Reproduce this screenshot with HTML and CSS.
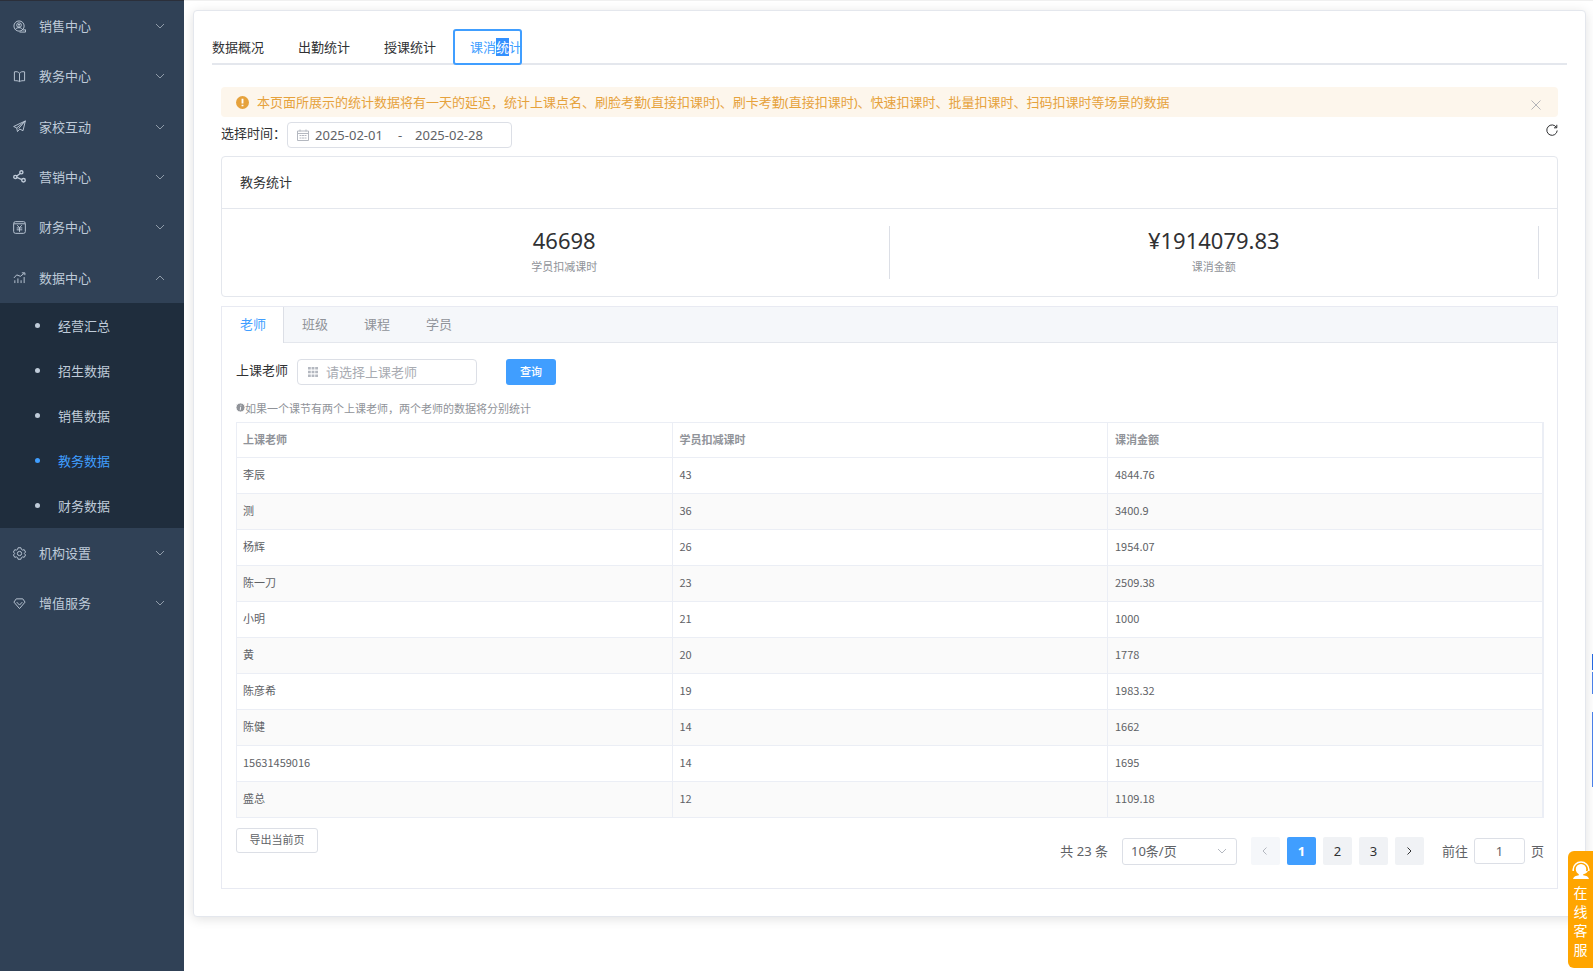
FILE: index.html
```html
<!DOCTYPE html>
<html lang="zh-CN">
<head>
<meta charset="utf-8">
<title>教务数据</title>
<link rel="stylesheet" href="styles.css">
</head>
<body>
<svg class="defs" aria-hidden="true">
  <symbol id="down" viewBox="0 0 10 10"><path d="M1 3l4 4 4-4"/></symbol>
  <symbol id="up" viewBox="0 0 10 10"><path d="M1 7l4-4 4 4"/></symbol>
</svg>
<div class="layout">
  <nav class="sidebar">
    <ul class="menu menu-top">
      <li><button class="menu-item"><svg class="ico" viewBox="0 0 14 14"><circle cx="6.5" cy="6.5" r="5.5"/><circle cx="6.5" cy="5.5" r="2.5"/><path d="M5.500 4.300l1 1.300 1-1.300M6.500 5.600v2M2.500 10.300c1-1.500 2-2 4-2s3.500 1 4 2.500l3-.3v2.500H7"/></svg><span>销售中心</span><svg class="arrow"><use href="#down"/></svg></button></li>
      <li><button class="menu-item"><svg class="ico" viewBox="0 0 14 14"><path d="M7 3.500C6 2 4 1.500 1.500 2v9.500c2 0 4 0 5.500 1 1.500-1 3.500-1 5.500-1V2C10 1.500 8 2 7 3.500zM7 3.500v9"/></svg><span>教务中心</span><svg class="arrow"><use href="#down"/></svg></button></li>
      <li><button class="menu-item"><svg class="ico" viewBox="0 0 14 14"><path d="M.7 7L13.300 1l-2.500 10.500-3.500-1.700-2.500 2.700-.8-4zM4 8.500L13.300 1 6 9.300"/></svg><span>家校互动</span><svg class="arrow"><use href="#down"/></svg></button></li>
      <li><button class="menu-item"><svg class="ico ico-bold" viewBox="0 0 14 14"><circle cx="2.500" cy="7.500" r="1.700"/><circle cx="9" cy="2.500" r="1.700"/><circle cx="11.300" cy="11" r="1.900"/><path d="M4 6.500l3.800-2.800M4.200 8l5.300 2.300"/></svg><span>营销中心</span><svg class="arrow"><use href="#down"/></svg></button></li>
      <li><button class="menu-item"><svg class="ico" viewBox="0 0 14 14"><rect x=".7" y=".7" width="12.600" height="12.600" rx="2"/><path d="M1 3h12M4.500 4.500L7 7.200l2.500-2.700M7 7.200v4.500M4 7.500h6M4 9.500h6"/></svg><span>财务中心</span><svg class="arrow"><use href="#down"/></svg></button></li>
      <li><button class="menu-item"><svg class="ico" viewBox="0 0 14 14"><path d="M2 13v-3M5.300 13V8M8.700 13v-3M12 13V6.500M1 7.500l3-3.300 4 1.500 4-3.200M9.500 2h3.300v2.500"/></svg><span>数据中心</span><svg class="arrow"><use href="#up"/></svg></button></li>
    </ul>
    <ul class="submenu">
      <li><a href="#">经营汇总</a></li>
      <li><a href="#">招生数据</a></li>
      <li><a href="#">销售数据</a></li>
      <li><a href="#" class="current">教务数据</a></li>
      <li><a href="#">财务数据</a></li>
    </ul>
    <ul class="menu">
      <li><button class="menu-item"><svg class="ico" viewBox="0 0 14 14"><circle cx="7" cy="7" r="2.300"/><path d="M5.500.8h3l.5 1.700 1.300.8 1.800-.4 1.400 2.500L12.200 7l1.300 1.600-1.400 2.500-1.800-.4-1.300.8-.5 1.700h-3L5 11.500l-1.300-.8-1.800.4L.5 8.600 1.800 7 .5 5.400l1.400-2.500 1.800.4L5 2.500z"/></svg><span>机构设置</span><svg class="arrow"><use href="#down"/></svg></button></li>
      <li><button class="menu-item"><svg class="ico" viewBox="0 0 14 14"><path d="M3.500 2h7l2.500 3.500L7 12.500 1 5.500zM4 5.500l3 3.200 3-3.200"/></svg><span>增值服务</span><svg class="arrow"><use href="#down"/></svg></button></li>
    </ul>
  </nav>

  <main class="main">
    <section class="page-card">
      <div class="page-tabs" role="tablist">
        <button role="tab">数据概况</button>
        <button role="tab">出勤统计</button>
        <button role="tab">授课统计</button>
        <button role="tab" class="selected" aria-selected="true">课消<mark>统</mark>计</button>
      </div>

      <div class="content">
        <div class="notice">
          <svg class="notice-icon" viewBox="0 0 14 14"><circle cx="7" cy="7" r="7"/><path d="M7 3v5M7 9.500v1.500"/></svg>
          <p>本页面所展示的统计数据将有一天的延迟，统计上课点名、刷脸考勤(直接扣课时)、刷卡考勤(直接扣课时)、快速扣课时、批量扣课时、扫码扣课时等场景的数据</p>
          <button class="notice-close" aria-label="关闭"><svg viewBox="0 0 10 10"><path d="M.5.5l9 9M9.500.5l-9 9"/></svg></button>
        </div>

        <div class="date-row">
          <label for="from">选择时间：</label>
          <div class="date-range">
            <svg class="calendar" viewBox="0 0 12 12"><path d="M.5 2h11v9.500H.5zM.5 4.500h11M3 .5v2M9 .5v2M2.500 6.500h2M5 6.500h2M7.500 6.500h2M2.500 9h2M5 9h2M7.500 9h2"/></svg>
            <input id="from" value="2025-02-01"><span>-</span><input aria-label="结束日期" value="2025-02-28">
          </div>
          <button class="refresh" aria-label="刷新"><svg viewBox="0 0 12 12"><path d="M10.500 3.500A5.200 5.200 0 1 0 11.200 6.500M10.800.8v3H8"/></svg></button>
        </div>

        <section class="stats">
          <h2>教务统计</h2>
          <div class="stats-body">
            <div class="stat"><strong>46698</strong><span>学员扣减课时</span></div>
            <div class="stat"><strong>¥1914079.83</strong><span>课消金额</span></div>
          </div>
        </section>

        <section class="panel">
          <div class="panel-tabs" role="tablist">
            <button role="tab" class="selected" aria-selected="true">老师</button>
            <button role="tab">班级</button>
            <button role="tab">课程</button>
            <button role="tab">学员</button>
          </div>
          <div class="panel-body">
            <form class="filter">
              <label for="teacher">上课老师</label>
              <div class="teacher-box">
                <svg viewBox="0 0 10 10"><path d="M0 0h2.800v2.500H0zM3.600 0h2.800v2.500H3.600zM7.200 0H10v2.500H7.200zM0 3.700h2.800v2.500H0zM3.600 3.700h2.800v2.500H3.600zM7.200 3.700H10v2.500H7.200zM0 7.400h2.800v2.500H0zM3.600 7.400h2.800v2.500H3.600zM7.200 7.400H10v2.500H7.200z"/></svg>
                <input id="teacher" placeholder="请选择上课老师">
              </div>
              <button type="button" class="primary">查询</button>
            </form>
            <p class="hint"><svg viewBox="0 0 10 10"><circle cx="5" cy="5" r="5"/><path d="M5.500 2v1M5.200 4.200L4.700 8"/></svg>如果一个课节有两个上课老师，两个老师的数据将分别统计</p>
            <table>
              <thead><tr><th>上课老师</th><th>学员扣减课时</th><th>课消金额</th></tr></thead>
              <tbody>
                <tr><td>李辰</td><td>43</td><td>4844.76</td></tr>
                <tr><td>测</td><td>36</td><td>3400.9</td></tr>
                <tr><td>杨辉</td><td>26</td><td>1954.07</td></tr>
                <tr><td>陈一刀</td><td>23</td><td>2509.38</td></tr>
                <tr><td>小明</td><td>21</td><td>1000</td></tr>
                <tr><td>黄</td><td>20</td><td>1778</td></tr>
                <tr><td>陈彦希</td><td>19</td><td>1983.32</td></tr>
                <tr><td>陈健</td><td>14</td><td>1662</td></tr>
                <tr><td>15631459016</td><td>14</td><td>1695</td></tr>
                <tr><td>盛总</td><td>12</td><td>1109.18</td></tr>
              </tbody>
            </table>
            <div class="table-footer">
              <button class="export">导出当前页</button>
              <div class="pagination">
                <span class="total">共 23 条</span>
                <div class="size-box">
                  <select aria-label="每页条数"><option>10条/页</option></select>
                  <svg><use href="#down"/></svg>
                </div>
                <div class="pages">
                  <button disabled aria-label="上一页"><svg viewBox="0 0 10 10"><path d="M6.500 1.500L3 5l3.500 3.500"/></svg></button>
                  <button class="current">1</button>
                  <button>2</button>
                  <button>3</button>
                  <button aria-label="下一页"><svg viewBox="0 0 10 10"><path d="M3.500 1.500L7 5 3.500 8.500"/></svg></button>
                </div>
                <label class="jump">前往<input value="1">页</label>
              </div>
            </div>
          </div>
        </section>
      </div>
    </section>
  </main>
</div>
<div class="edge" aria-hidden="true"><i></i><i></i><i class="tall"></i></div>
<button class="service">
  <svg viewBox="0 0 18 18"><path class="line" d="M1.200 10V8.500a7.800 7.500 0 0 1 15.600 0V10"/><path d="M9 3a5.200 5 0 0 1 5.200 5.300c0 .8-.1 1.300-.3 1.900l2.300-.6c-.6 2-2.700 3.300-5 3.600v1c3 .4 5.300 1.300 5.800 3.800H1c.5-2.500 3-3.400 5.800-3.800v-1C5 12.200 3.800 10.500 3.800 8.300A5.200 5 0 0 1 9 3z"/></svg>
  <span>在</span><span>线</span><span>客</span><span>服</span>
</button>
</body>
</html>
```

FILE: styles.css
```css
* { box-sizing: border-box; }
body {
  margin: 0;
  background: #fff;
  color: #303133;
  font: 13px/20px "Noto Sans", "Noto Sans CJK SC", sans-serif;
}
ul, p, h2 { margin: 0; padding: 0; list-style: none; }
button, input, select { font: inherit; color: inherit; margin: 0; padding: 0; border: 0; background: none; }
input { min-width: 0; outline: 0; }
svg { display: block; fill: none; stroke: currentColor; flex: none; }
.defs { position: absolute; width: 0; height: 0; }

.layout { display: flex; min-height: 100vh; }

/* Sidebar */
.sidebar { flex: none; width: 184px; background: #304156; border-top: 1px solid #2b2f3a; color: #bfcbd9; }
.menu-top { display: grid; grid-auto-rows: 1fr; height: 302px; }
.menu-item { display: flex; align-items: center; width: 100%; height: 50px; padding: 0 19px 0 13px; text-align: left; }
.menu-item span { flex: 1; margin-left: 13px; }
.ico { width: 13px; height: 13px; }
.ico-bold { stroke-width: 1.5; }
.arrow { width: 10px; height: 10px; color: #909caa; }
.submenu { background: #1f2d3d; }
.submenu a { display: flex; align-items: center; gap: 18px; height: 45px; padding-left: 35px; color: inherit; text-decoration: none; }
.submenu a::before { content: ""; width: 5px; height: 5px; border-radius: 50%; background: currentColor; }
.submenu .current { color: #409eff; }

/* Page card */
.main { flex: 1; min-width: 0; padding: 9px 7px 0 9px; border-top: 1px solid #f0f0f0; }
.page-card { padding: 18px 18px 27px 18px; border: 1px solid #e4e7ed; border-radius: 4px; background: #fff; box-shadow: 0 2px 12px rgba(0, 0, 0, .12); }
.page-tabs { display: flex; border-bottom: 2px solid #e4e7ed; }
.page-tabs button { height: 36px; margin-bottom: -2px; padding: 0 17px; }
.page-tabs button:first-child { padding-left: 0; }
.page-tabs .selected { padding: 0 0 0 17px; border-radius: 3px; color: #409eff; box-shadow: inset 0 0 0 2px #409eff; }
mark { background: #3390ff; color: #fff; }
.content { padding: 22px 9px 0; }

.notice { display: flex; align-items: center; height: 30px; padding: 0 17px 0 15px; border-radius: 4px; background: #fdf6ec; color: #e6a23c; }
.notice p { flex: 1; margin-left: 8px; }
.notice-icon { width: 13px; height: 13px; fill: currentColor; stroke: none; }
.notice-icon path { stroke: #fff; stroke-width: 2; }
.notice-close { color: #b4b4b8; padding-top: 5px; }
.notice-close svg { width: 10px; height: 10px; }

.date-row { display: flex; align-items: flex-start; padding: 5px 0 8px; }
.date-row label { line-height: 22px; }
.date-range { display: flex; align-items: center; width: 225px; height: 26px; margin-left: 1px; padding-left: 9px; border: 1px solid #dcdfe6; border-radius: 4px; color: #606266; }
.calendar { width: 12px; height: 12px; color: #b4b8c0; }
.date-range input { width: 71px; margin-left: 6px; }
.date-range span { width: 18px; margin-left: 5px; text-align: center; }
.refresh { margin: 2px 0 0 auto; }
.refresh svg { width: 12px; height: 12px; }

.stats { border: 1px solid #e4e7ed; border-radius: 4px; }
.stats h2 { padding: 15px 18px 16px; border-bottom: 1px solid #e4e7ed; font-size: 13px; font-weight: 400; }
.stats-body { display: grid; grid-template-columns: 1fr 1fr; padding: 17px 18px; }
.stat { display: flex; flex-direction: column; align-items: center; height: 53px; border-right: 1px solid #dcdfe6; }
.stat strong { font-size: 22px; font-weight: 400; line-height: 28px; }
.stat span { margin-top: 3px; color: #909399; font-size: 11px; }

/* Teacher / class / course / student panel */
.panel { margin-top: 9px; border: 1px solid #e8eaf2; }
.panel-tabs { display: flex; background: #f5f7fa; border-bottom: 1px solid #e4e7ed; }
.panel-tabs button { height: 35px; padding: 0 18px 2px; color: #909399; }
.panel-tabs .selected { margin-bottom: -1px; height: 36px; padding: 0 17px 3px 18px; border-right: 1px solid #dcdfe6; background: #fff; color: #409eff; }
.panel-body { padding: 16px 13px 23px 14px; }
.filter { display: flex; align-items: center; }
.filter label { height: 24px; }
.teacher-box { display: flex; align-items: center; gap: 8px; width: 180px; height: 26px; margin: 0 29px 0 9px; padding: 0 10px; border: 1px solid #dcdfe6; border-radius: 4px; color: #a8abb2; }
.teacher-box svg { width: 10px; height: 10px; fill: #b4b8c0; stroke: none; }
.teacher-box input { flex: 1; }
.teacher-box ::placeholder { color: #a8abb2; }
.primary { width: 50px; height: 26px; border-radius: 3px; background: #409eff; color: #fff; font-size: 11px; font-weight: 500; }
.hint { display: flex; align-items: center; margin: 14px 0 3px; color: #909399; font-size: 11px; }
.hint svg { width: 9px; height: 9px; margin-bottom: 3px; fill: #909399; stroke: #fff; }

table { width: 100%; border-collapse: collapse; border-right: 2px solid #ebeef5; table-layout: fixed; color: #606266; font: 11px/20px "Noto Sans CJK SC", sans-serif; }
th, td { height: 36px; padding: 0 6px 3px 7px; border: 1px solid #ebeef5; text-align: left; }
th { height: 35px; color: #909399; font-weight: 700; }
th:first-child, td:first-child { padding-left: 6px; }
th:last-child, td:last-child { border-right-width: 2px; }
tbody tr:nth-child(even) { background: #fafafa; }

.table-footer { display: flex; align-items: flex-start; justify-content: space-between; padding-top: 10px; }
.export { width: 82px; height: 25px; padding-bottom: 1px; border: 1px solid #dcdfe6; border-radius: 3px; color: #606266; font-size: 11px; line-height: 18px; }
.pagination { display: flex; align-items: center; margin-top: 9px; color: #606266; }
.size-box { display: flex; align-items: center; width: 115px; height: 27px; margin: 0 14px; padding: 0 9px 0 8px; border: 1px solid #dcdfe6; border-radius: 3px; }
.size-box select { flex: 1; appearance: none; }
.size-box svg { width: 10px; height: 10px; color: #b4b8c0; }
.pages { display: flex; gap: 7px; color: #303133; }
.pages button { display: grid; place-items: center; width: 29px; height: 28px; border-radius: 2px; background: #f0f2f5; }
.pages .current { background: #409eff; color: #fff; font-weight: 700; }
.pages button:disabled { background: #f5f7fa; color: #b4b8c0; }
.pages svg { width: 10px; height: 10px; }
.jump { display: flex; align-items: center; gap: 6px; margin-left: 18px; }
.jump input { width: 51px; height: 26px; border: 1px solid #dcdfe6; border-radius: 3px; text-align: center; }

/* Floating widgets */
.edge { position: fixed; right: 0; top: 654px; display: grid; gap: 2px; width: 1px; }
.edge i { height: 16px; background: #2468e0; }
.edge i + i { height: 22px; background: #4a80e8; }
.edge .tall.tall { height: 75px; margin-top: 16px; background: #4a80e8; }
.service { position: fixed; right: 0; bottom: 3px; display: flex; flex-direction: column; align-items: center; width: 25px; padding: 10px 0 9px; border-radius: 6px 0 0 6px; background: #ffa500; color: #fff; font-size: 14px; line-height: 19px; }
.service svg { width: 18px; height: 18px; margin-bottom: 4px; fill: #fff; stroke: none; }
.service .line { fill: none; stroke: #fff; stroke-width: 1.5; }
```
